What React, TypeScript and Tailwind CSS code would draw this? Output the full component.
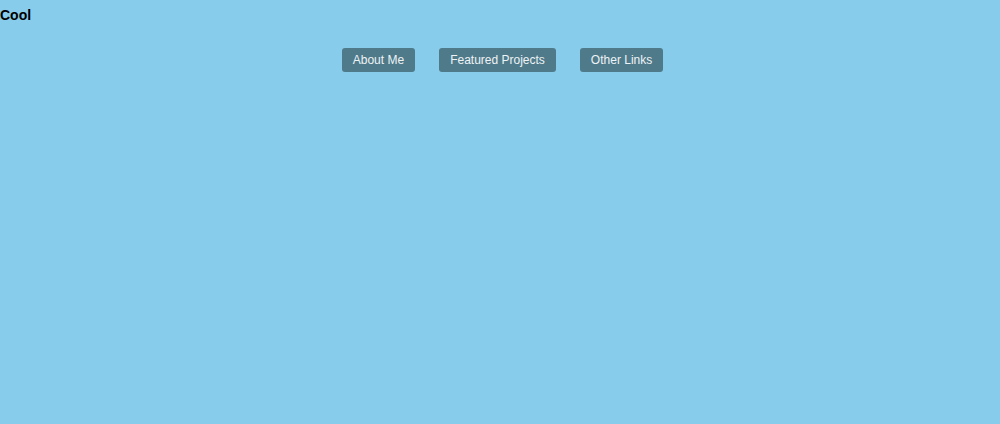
export default function App() {
  const links = ['About Me', 'Featured Projects', 'Other Links'];
  return (
    <div className="min-h-[424px] w-full bg-[#87cceb] font-['Liberation_Sans',Arial,sans-serif]">
      <h1 className="pt-[7px] text-[14px] leading-[16px] font-bold text-black">Cool</h1>
      <nav className="mt-[25px] flex justify-center gap-6 pl-[5px]">
        {links.map((l) => (
          <button
            key={l}
            className="h-6 rounded-[3px] bg-[#4f7a8a] px-[11px] text-[12px] leading-6 text-[#eef3f5]"
          >
            {l}
          </button>
        ))}
      </nav>
    </div>
  );
}
